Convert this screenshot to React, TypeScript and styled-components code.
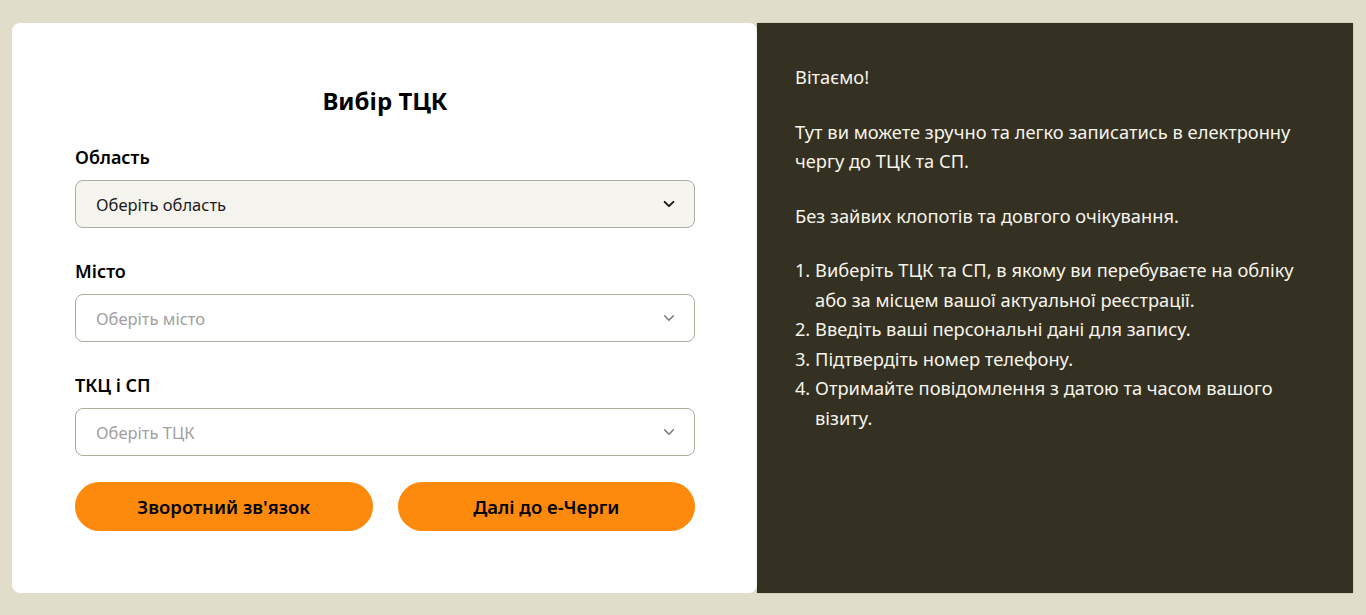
import React from "react";
import styled, { createGlobalStyle } from "styled-components";

const Global = createGlobalStyle`
  html, body { margin: 0; padding: 0; }
  body {
    background: #e0ddca;
    font-family: "Noto Sans", "Open Sans", sans-serif;
    color: #111;
  }
  * { box-sizing: border-box; }
`;

const Page = styled.div`
  display: flex;
  padding: 23px 13px 22px 12px;
  height: 615px;
`;

const FormCard = styled.div`
  width: 745px;
  flex: none;
  background: #ffffff;
  border-radius: 8px;
  padding: 60px 62px 0 63px;
  display: flex;
  flex-direction: column;
`;

const Title = styled.h1`
  margin: 0 0 26px;
  text-align: center;
  font-size: 24px;
  font-weight: 700;
  line-height: 36px;
  color: #000;
`;

const Field = styled.div`
  display: flex;
  flex-direction: column;
  margin-bottom: 31px;
`;

const Label = styled.label`
  font-size: 18px;
  font-weight: 600;
  line-height: 24px;
  margin-bottom: 11px;
  color: #000;
`;

const Select = styled.div<{ $filled?: boolean }>`
  height: 48px;
  border: 1px solid #aeac9f;
  border-radius: 8px;
  background: ${(p) => (p.$filled ? "#f5f4ef" : "#ffffff")};
  display: flex;
  align-items: center;
  justify-content: space-between;
  padding: 0 18px 0 20px;
  font-size: 16.5px;
  color: ${(p) => (p.$filled ? "#1c1c1c" : "#a0a0a0")};
`;

const Chevron = styled.svg<{ $filled?: boolean }>`
  width: 14px;
  height: 14px;
  color: ${(p) => (p.$filled ? "#1a1a1a" : "#7a7a7a")};
`;

const Buttons = styled.div`
  display: grid;
  grid-template-columns: 1fr 1fr;
  gap: 25px;
  margin-top: -5px;
`;

const Button = styled.button`
  height: 49px;
  border: none;
  border-radius: 25px;
  background: #fd8a0c;
  color: #000;
  font-family: inherit;
  font-size: 18.5px;
  font-weight: 600;
  cursor: pointer;
`;

const InfoPanel = styled.div`
  width: 596px;
  flex: none;
  background: #343022;
  color: #f6f4ec;
  padding: 39px 38px 0 38px;
  font-size: 18.3px;
  line-height: 29.5px;
  box-shadow: 0 0 2px rgba(0, 0, 0, 0.15);
`;

const Para = styled.p`
  margin: 0 0 25px;
`;

const Steps = styled.ol`
  margin: 0;
  padding-left: 20px;
`;

const Arrow = ({ filled }: { filled?: boolean }) => (
  <Chevron $filled={filled} viewBox="0 0 16 16" fill="none">
    <path
      d="M3 5.5l5 5 5-5"
      stroke="currentColor"
      strokeWidth={filled ? 2.2 : 1.8}
      strokeLinecap="round"
      strokeLinejoin="round"
    />
  </Chevron>
);

export default function App() {
  return (
    <>
      <Global />
      <Page>
        <FormCard>
          <Title>Вибір ТЦК</Title>
          <Field>
            <Label>Область</Label>
            <Select $filled>
              <span>Оберіть область</span>
              <Arrow filled />
            </Select>
          </Field>
          <Field>
            <Label>Місто</Label>
            <Select>
              <span>Оберіть місто</span>
              <Arrow />
            </Select>
          </Field>
          <Field>
            <Label>ТКЦ і СП</Label>
            <Select>
              <span>Оберіть ТЦК</span>
              <Arrow />
            </Select>
          </Field>
          <Buttons>
            <Button>Зворотний зв'язок</Button>
            <Button>Далі до е-Черги</Button>
          </Buttons>
        </FormCard>
        <InfoPanel>
          <Para>Вітаємо!</Para>
          <Para>
            Тут ви можете зручно та легко записатись в електронну чергу до ТЦК
            та СП.
          </Para>
          <Para>Без зайвих клопотів та довгого очікування.</Para>
          <Steps>
            <li>
              Виберіть ТЦК та СП, в якому ви перебуваєте на обліку або за
              місцем вашої актуальної реєстрації.
            </li>
            <li>Введіть ваші персональні дані для запису.</li>
            <li>Підтвердіть номер телефону.</li>
            <li>Отримайте повідомлення з датою та часом вашого візиту.</li>
          </Steps>
        </InfoPanel>
      </Page>
    </>
  );
}
